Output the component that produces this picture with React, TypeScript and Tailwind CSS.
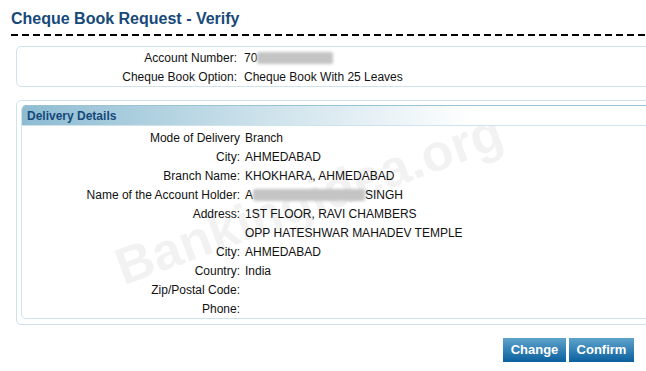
import React from "react";

type Row = { label: string; value: React.ReactNode };

function Blur({ w }: { w: number }) {
  return (
    <span
      className="inline-block h-[12px] align-[-2px] rounded-[2px] bg-[#c4c4c4] blur-[1.5px]"
      style={{ width: w }}
    />
  );
}

const delivery: Row[] = [
  { label: "Mode of Delivery", value: "Branch" },
  { label: "City:", value: "AHMEDABAD" },
  { label: "Branch Name:", value: "KHOKHARA, AHMEDABAD" },
  {
    label: "Name of the Account Holder:",
    value: (
      <span className="inline-flex items-center">
        A<Blur w={112} />SINGH
      </span>
    ),
  },
  { label: "Address:", value: "1ST FLOOR, RAVI CHAMBERS" },
  { label: "", value: "OPP HATESHWAR MAHADEV TEMPLE" },
  { label: "City:", value: "AHMEDABAD" },
  { label: "Country:", value: "India" },
  { label: "Zip/Postal Code:", value: "" },
  { label: "Phone:", value: "" },
];

export default function App() {
  return (
    <div className="relative w-[646px] h-[371px] overflow-hidden bg-white text-[12px] text-[#111] font-['Liberation_Sans',Arial,sans-serif]">
      {/* watermark, sits under the content */}
      <div className="pointer-events-none absolute left-[105px] top-[160px] z-0 -rotate-[20deg] whitespace-nowrap text-[52px] font-bold text-black/[0.05]">
        Bankingidea.org
      </div>

      <div className="relative z-10">
        <h1 className="pl-[11px] pt-[9px] text-[16px] leading-[20px] font-bold text-[#17497a]">
          Cheque Book Request - Verify
        </h1>
        <div className="ml-[11px] mt-[5px] h-[2px] bg-[repeating-linear-gradient(90deg,#000_0_7px,transparent_7px_11px)]" />

        {/* account box */}
        <div className="ml-[16px] mt-[10px] w-[660px] rounded-[5px] border border-[#cfe3ee] pt-[1px]">
          <div className="flex h-[19px] items-center">
            <div className="w-[220px] text-right">Account Number:</div>
            <div className="ml-[7px] flex items-center">
              70<Blur w={76} />
            </div>
          </div>
          <div className="flex h-[19px] items-center">
            <div className="w-[220px] text-right">Cheque Book Option:</div>
            <div className="ml-[7px]">Cheque Book With 25 Leaves</div>
          </div>
        </div>

        {/* delivery box */}
        <div className="ml-[16px] mt-[13px] w-[660px] rounded-[5px] border border-[#cfe3ee] px-[4px] pt-[4px] pb-[5px]">
          <div className="rounded-[5px] border border-[#cfe3ee] border-t-[#9cc2d5]">
            <div className="h-[20px] rounded-t-[4px] border-b border-[#cfe3ee] bg-[linear-gradient(90deg,#8dbcd2_0%,#c9e0ea_35%,#ffffff_70%)] pl-[5px] text-[12px] leading-[20px] font-bold text-[#17497a]">
              Delivery Details
            </div>
            <div className="pt-[2px]">
              {delivery.map((r, i) => (
                <div key={i} className="flex h-[19px] items-center">
                  <div className="w-[218px] text-right">{r.label}</div>
                  <div className="ml-[5px]">{r.value}</div>
                </div>
              ))}
            </div>
          </div>
        </div>

        <div className="mt-[13px] flex justify-end gap-[3px] pr-[12px]">
          <button className="h-[24px] w-[63px] bg-[linear-gradient(180deg,#5ea3cb,#0b609f)] text-[13px] font-bold text-white">
            Change
          </button>
          <button className="h-[24px] w-[65px] bg-[linear-gradient(180deg,#5ea3cb,#0b609f)] text-[13px] font-bold text-white">
            Confirm
          </button>
        </div>
      </div>
    </div>
  );
}
